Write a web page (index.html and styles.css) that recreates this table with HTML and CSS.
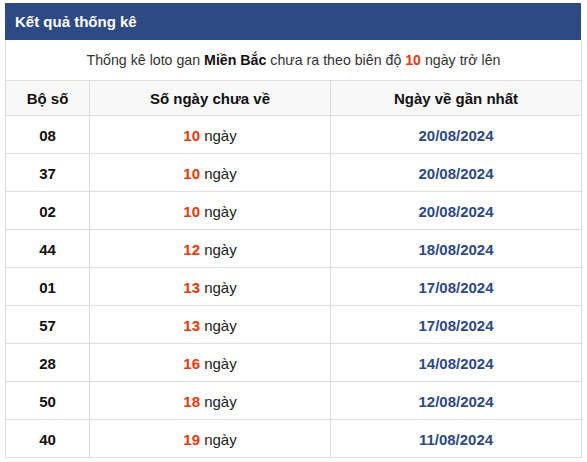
FILE: index.html
```html
<!DOCTYPE html>
<html>
<head>
<meta charset="utf-8">
<link rel="stylesheet" href="styles.css">
</head>
<body>
<div class="box">
  <div class="title">Kết quả thống kê</div>
  <table class="stats">
    <colgroup><col class="c1"><col class="c2"><col class="c3"></colgroup>
    <tr><td colspan="3" class="desc">Thống kê loto gan <b>Miền Bắc</b> chưa ra theo biên độ <b class="red">10</b> ngày trở lên</td></tr>
    <tr class="head"><th>Bộ số</th><th>Số ngày chưa về</th><th>Ngày về gần nhất</th></tr>
    <tr><td class="num">08</td><td><b class="red">10</b> ngày</td><td class="date">20/08/2024</td></tr>
    <tr><td class="num">37</td><td><b class="red">10</b> ngày</td><td class="date">20/08/2024</td></tr>
    <tr><td class="num">02</td><td><b class="red">10</b> ngày</td><td class="date">20/08/2024</td></tr>
    <tr><td class="num">44</td><td><b class="red">12</b> ngày</td><td class="date">18/08/2024</td></tr>
    <tr><td class="num">01</td><td><b class="red">13</b> ngày</td><td class="date">17/08/2024</td></tr>
    <tr><td class="num">57</td><td><b class="red">13</b> ngày</td><td class="date">17/08/2024</td></tr>
    <tr><td class="num">28</td><td><b class="red">16</b> ngày</td><td class="date">14/08/2024</td></tr>
    <tr><td class="num">50</td><td><b class="red">18</b> ngày</td><td class="date">12/08/2024</td></tr>
    <tr><td class="num">40</td><td><b class="red">19</b> ngày</td><td class="date">11/08/2024</td></tr>
  </table>
</div>
</body>
</html>
```
FILE: styles.css
```css
html, body { margin: 0; padding: 0; background: #fff; }
body { font-family: "Liberation Sans", Arial, sans-serif; color: #222; }
.box { margin: 3px 0 0 5px; width: 576px; }
.title {
  background: #2e4a84;
  color: #fff;
  font-weight: bold;
  font-size: 15px;
  height: 37px;
  line-height: 37px;
  padding-left: 10px;
}
.stats { border-collapse: collapse; width: 576px; table-layout: fixed; }
.c1 { width: 84px; }
.c2 { width: 241px; }
.c3 { width: 251px; }
.stats td, .stats th {
  border: 1px solid #ddd;
  text-align: center;
  font-size: 15px;
  height: 36px;
  padding: 1px 0 0;
}
.stats td.desc { height: 40px; border-top: none; color: #333; font-size: 14.2px; padding: 0; }
.desc b { color: #111; }
.stats .head th { height: 34px; background: #f8f8f8; font-size: 15px; color: #111; padding: 0; }
.num { font-weight: bold; color: #111; }
.red, .desc b.red { color: #e8380d; }
.date { font-weight: bold; color: #2e4a84; }
```
